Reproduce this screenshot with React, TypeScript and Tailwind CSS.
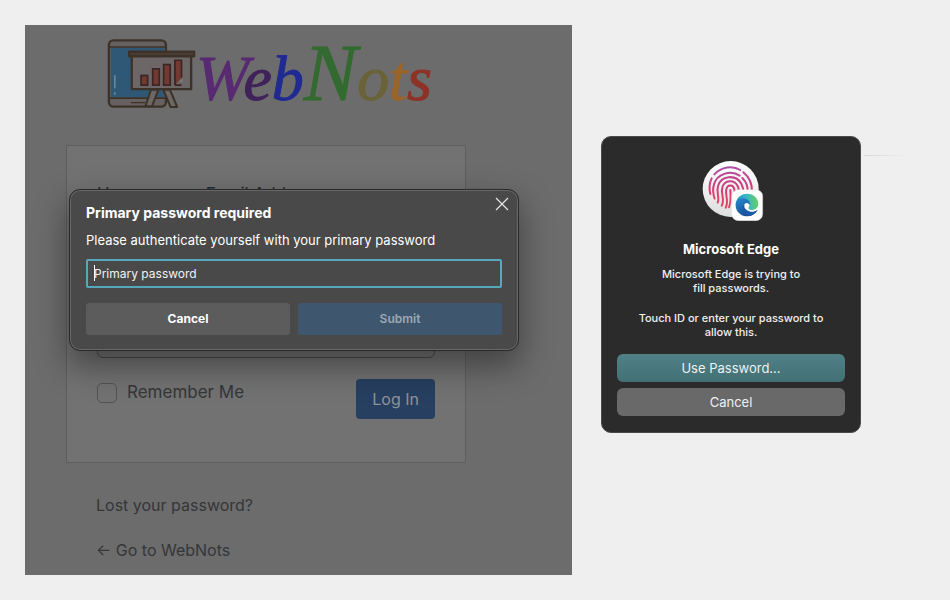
import React from "react";

const logoLetters = [
  { char: "W", style: "text-[#582a72]" },
  { char: "e", style: "text-[#40225a]" },
  { char: "b", style: "text-[#202a92]" },
  { char: "N", style: "text-[#336a2f] text-[80px]" },
  { char: "o", style: "text-[#6a6238]" },
  { char: "t", style: "text-[#9a652b]" },
  { char: "s", style: "text-[#8e3227]" },
];

function PresentationIcon() {
  return (
    <svg viewBox="50 40 270 214" className="h-[71px] w-[90px] shrink-0" aria-hidden="true">
      <g stroke="#3d3229" strokeWidth="7" strokeLinejoin="round" strokeLinecap="round">
        <rect x="58" y="47" width="172" height="200" rx="14" fill="#666160" />
        <rect x="64" y="69" width="161" height="150" fill="#2f5877" stroke="none" />
        <path d="M60 67H229M60 221H229" fill="none" strokeWidth="5" />
        <path d="M126 235H166" fill="none" strokeWidth="4" />
        <path d="M76 153V190M76 205V210" stroke="#7891a0" strokeWidth="4" />
        <path d="M185 196L168 246H188L207 196Z" fill="#6c6864" strokeWidth="6" />
        <path d="M222 196L244 248H264L242 196Z" fill="#6c6864" strokeWidth="6" />
        <rect x="127" y="92" width="179" height="102" fill="#6c6766" />
        <rect x="119" y="81" width="196" height="14" fill="#4b3c32" />
      </g>
      <g fill="#71392f" stroke="#3a2425" strokeWidth="5">
        <rect x="155" y="153" width="20" height="29" />
        <rect x="190" y="133" width="20" height="49" />
        <rect x="223" y="120" width="20" height="62" />
        <path d="M257 182V107H277V160M257 182H277" />
      </g>
      <rect x="273" y="166" width="7" height="7" fill="#807975" />
    </svg>
  );
}

function TouchIdIcon() {
  return (
    <svg viewBox="27 30 195 183" className="h-[61px] w-[65px]" aria-hidden="true">
      <defs>
        <linearGradient id="print" gradientUnits="userSpaceOnUse" x1="120" y1="55" x2="120" y2="175">
          <stop offset="0" stopColor="#b14da5" />
          <stop offset="0.5" stopColor="#d33c78" />
          <stop offset="1" stopColor="#e94860" />
        </linearGradient>
        <linearGradient id="disc" x1="0" y1="0" x2="0" y2="1">
          <stop offset="0" stopColor="#ffffff" />
          <stop offset="1" stopColor="#dedede" />
        </linearGradient>
        <linearGradient id="edgeTop" x1="0" y1="0.5" x2="1" y2="0.4">
          <stop offset="0" stopColor="#238bcb" />
          <stop offset="0.5" stopColor="#36b9c4" />
          <stop offset="1" stopColor="#69cf61" />
        </linearGradient>
        <linearGradient id="edgeLow" x1="0" y1="0" x2="0.5" y2="1">
          <stop offset="0" stopColor="#2689ce" />
          <stop offset="1" stopColor="#174b92" />
        </linearGradient>
      </defs>
      <circle cx="122" cy="117" r="84" fill="url(#disc)" />
      <g fill="none" stroke="url(#print)" strokeWidth="6" strokeLinecap="round">
        <path d="M73 73C95 49 128 46 151 60" />
        <path d="M160 67C178 82 187 101 186 126" />
        <path d="M61 132C57 115 58 99 65 85" />
        <path d="M74 146C69 132 68 116 72 103C80 73 121 58 149 77" />
        <path d="M157 84C170 96 174 112 173 128" />
        <path d="M83 158C90 144 78 127 84 108C93 76 138 72 154 101C159 110 161 119 160 130" />
        <path d="M95 167C106 148 91 130 97 112C104 89 132 88 143 108C147 116 147 124 147 134" />
        <path d="M107 173C118 153 104 133 109 118C112 103 129 102 133 117C135 126 134 140 131 151" />
        <path d="M121 120C122 137 124 154 117 172" />
      </g>
      <rect x="125" y="119" width="93" height="93" rx="20" fill="#fdfdfd" stroke="#dedede" />
      <path d="M137 164C138 144 153 131 171 131C191 131 205 145 205 161C205 174 193 182 181 179C175 177 174 174 177 170C184 160 175 151 163 151C151 151 142 157 137 164Z" fill="url(#edgeTop)" />
      <path d="M137 164C138 151 149 144 161 145C174 146 182 156 180 166C178 160 169 156 164 162C153 174 169 193 190 188C197 186 200 182 202 181C194 194 182 200 169 199C150 197 136 182 137 164Z" fill="url(#edgeLow)" />
      <path d="M164 162C151 172 155 192 177 198C191 196 198 188 203 180C190 188 178 186 170 180C163 175 161 169 164 162Z" fill="#1c59a7" />
    </svg>
  );
}

function LoginField({ id, label, type }: { id: string; label: string; type: string }) {
  return (
    <div className="flex flex-col gap-1">
      <label htmlFor={id} className="h-6 leading-6 text-[#272a2d]">{label}</label>
      <input id={id} type={type} className="h-12 w-full rounded-md border border-[#47494b] bg-transparent px-3" />
    </div>
  );
}

function PrimaryPasswordDialog() {
  return (
    <section
      role="dialog"
      aria-labelledby="primary-title"
      className="absolute top-[164px] right-[53px] left-11 rounded-[11px] border border-[#292929] bg-[#494949] px-4 pt-[13px] pb-[15px] text-white shadow-[inset_0_0_0_1px_#686868,0_14px_32px_2px_rgba(0,0,0,0.38)]"
    >
      <button type="button" aria-label="Close" className="absolute top-1.5 right-2 flex size-4 items-center justify-center">
        <svg viewBox="0 0 14 14" className="size-3.5" fill="none" stroke="#e5e5e5" strokeWidth="1.2">
          <path d="M1 1l12 12M13 1L1 13" />
        </svg>
      </button>
      <h2 id="primary-title" className="text-sm leading-5 font-bold">Primary password required</h2>
      <label htmlFor="primary" className="mt-[7px] block text-[13px] leading-5">
        Please authenticate yourself with your primary password
      </label>
      <div className="relative mt-[9px]">
        <input
          id="primary"
          type="password"
          placeholder="Primary password"
          className="block h-[29px] w-full rounded-xs border-2 border-[#56a8bd] bg-[#494949] px-1.5 text-xs text-white outline-none placeholder:text-[#f1f1f1]"
        />
        <span className="absolute top-1.5 left-2 h-4 w-px bg-white" />
      </div>
      <div className="mt-[15px] grid grid-cols-2 gap-2 text-xs">
        <button type="button" className="h-8 rounded-[3px] bg-[#5c5c5c] font-bold text-white">Cancel</button>
        <button type="submit" className="h-8 rounded-[3px] bg-[#3f566f] font-semibold text-[#a0a8af]">Submit</button>
      </div>
    </section>
  );
}

function LoginPage() {
  return (
    <main className="relative min-w-0 flex-1 bg-[#6c6c6c] pt-[13px] pb-[13px] text-[17px] text-[#343638]">
      <h1 className="ml-[81px] flex h-[72px] items-start">
        <PresentationIcon />
        <span className="font-['Liberation_Serif',serif] text-[64px] leading-[70px] italic [-webkit-text-stroke:1px]">
          {logoLetters.map(({ char, style }) => (
            <span key={char} className={style}>{char}</span>
          ))}
        </span>
      </h1>
      <form className="mt-[35px] ml-[41px] max-w-[400px] border border-[#5c5f62] bg-[#727272] px-[30px] pt-9 pb-[43px]">
        <div className="flex flex-col gap-6">
          <LoginField id="username" label="Username or Email Address" type="text" />
          <LoginField id="password" label="Password" type="password" />
        </div>
        <div className="mt-[21px] flex items-start justify-between">
          <label className="flex items-center gap-2.5 leading-[27px] text-[#343638]">
            <input type="checkbox" className="size-5 appearance-none rounded-[5px] border border-[#505356]" />
            Remember Me
          </label>
          <button type="submit" className="h-10 rounded-sm bg-[#273f60] px-4 text-base text-[#8f9398]">Log In</button>
        </div>
      </form>
      <nav className="mt-[30px] ml-[71px] flex flex-col items-start gap-[21px] text-base leading-6">
        <a href="#lost">Lost your password?</a>
        <a href="#home">← Go to WebNots</a>
      </nav>
      <PrimaryPasswordDialog />
    </main>
  );
}

function TouchIdPrompt() {
  return (
    <aside className="flex w-[260px] flex-col items-center rounded-[10px] border border-[#4b4b4b] bg-[#2b2b2b] px-[15px] pt-[23px] pb-4 text-center text-[11px] leading-[14px] font-medium text-[#f0f0f0]">
      <TouchIdIcon />
      <h2 className="mt-[18px] text-[13px] leading-5 font-bold text-white">Microsoft Edge</h2>
      <p className="mt-2">Microsoft Edge is trying to<br />fill passwords.</p>
      <p className="mt-4">Touch ID or enter your password to<br />allow this.</p>
      <div className="mt-[15px] flex w-full flex-col gap-1.5 text-[13px] font-normal">
        <button type="button" className="h-7 rounded-md bg-linear-to-b from-[#508186] to-[#427075]">Use Password...</button>
        <button type="button" className="h-7 rounded-md bg-[#696969]">Cancel</button>
      </div>
    </aside>
  );
}

export default function App() {
  return (
    <div className="flex min-h-screen items-start gap-[29px] bg-[#efefef] py-[25px] pr-[42px] pl-[25px] font-[Inter,sans-serif]">
      <LoginPage />
      <div className="mt-[111px] flex shrink-0 items-start gap-[3px]">
        <TouchIdPrompt />
        <div className="mt-[19px] h-px w-11 bg-linear-to-r from-[#d8d8d8] to-[#efefef]" />
      </div>
    </div>
  );
}
